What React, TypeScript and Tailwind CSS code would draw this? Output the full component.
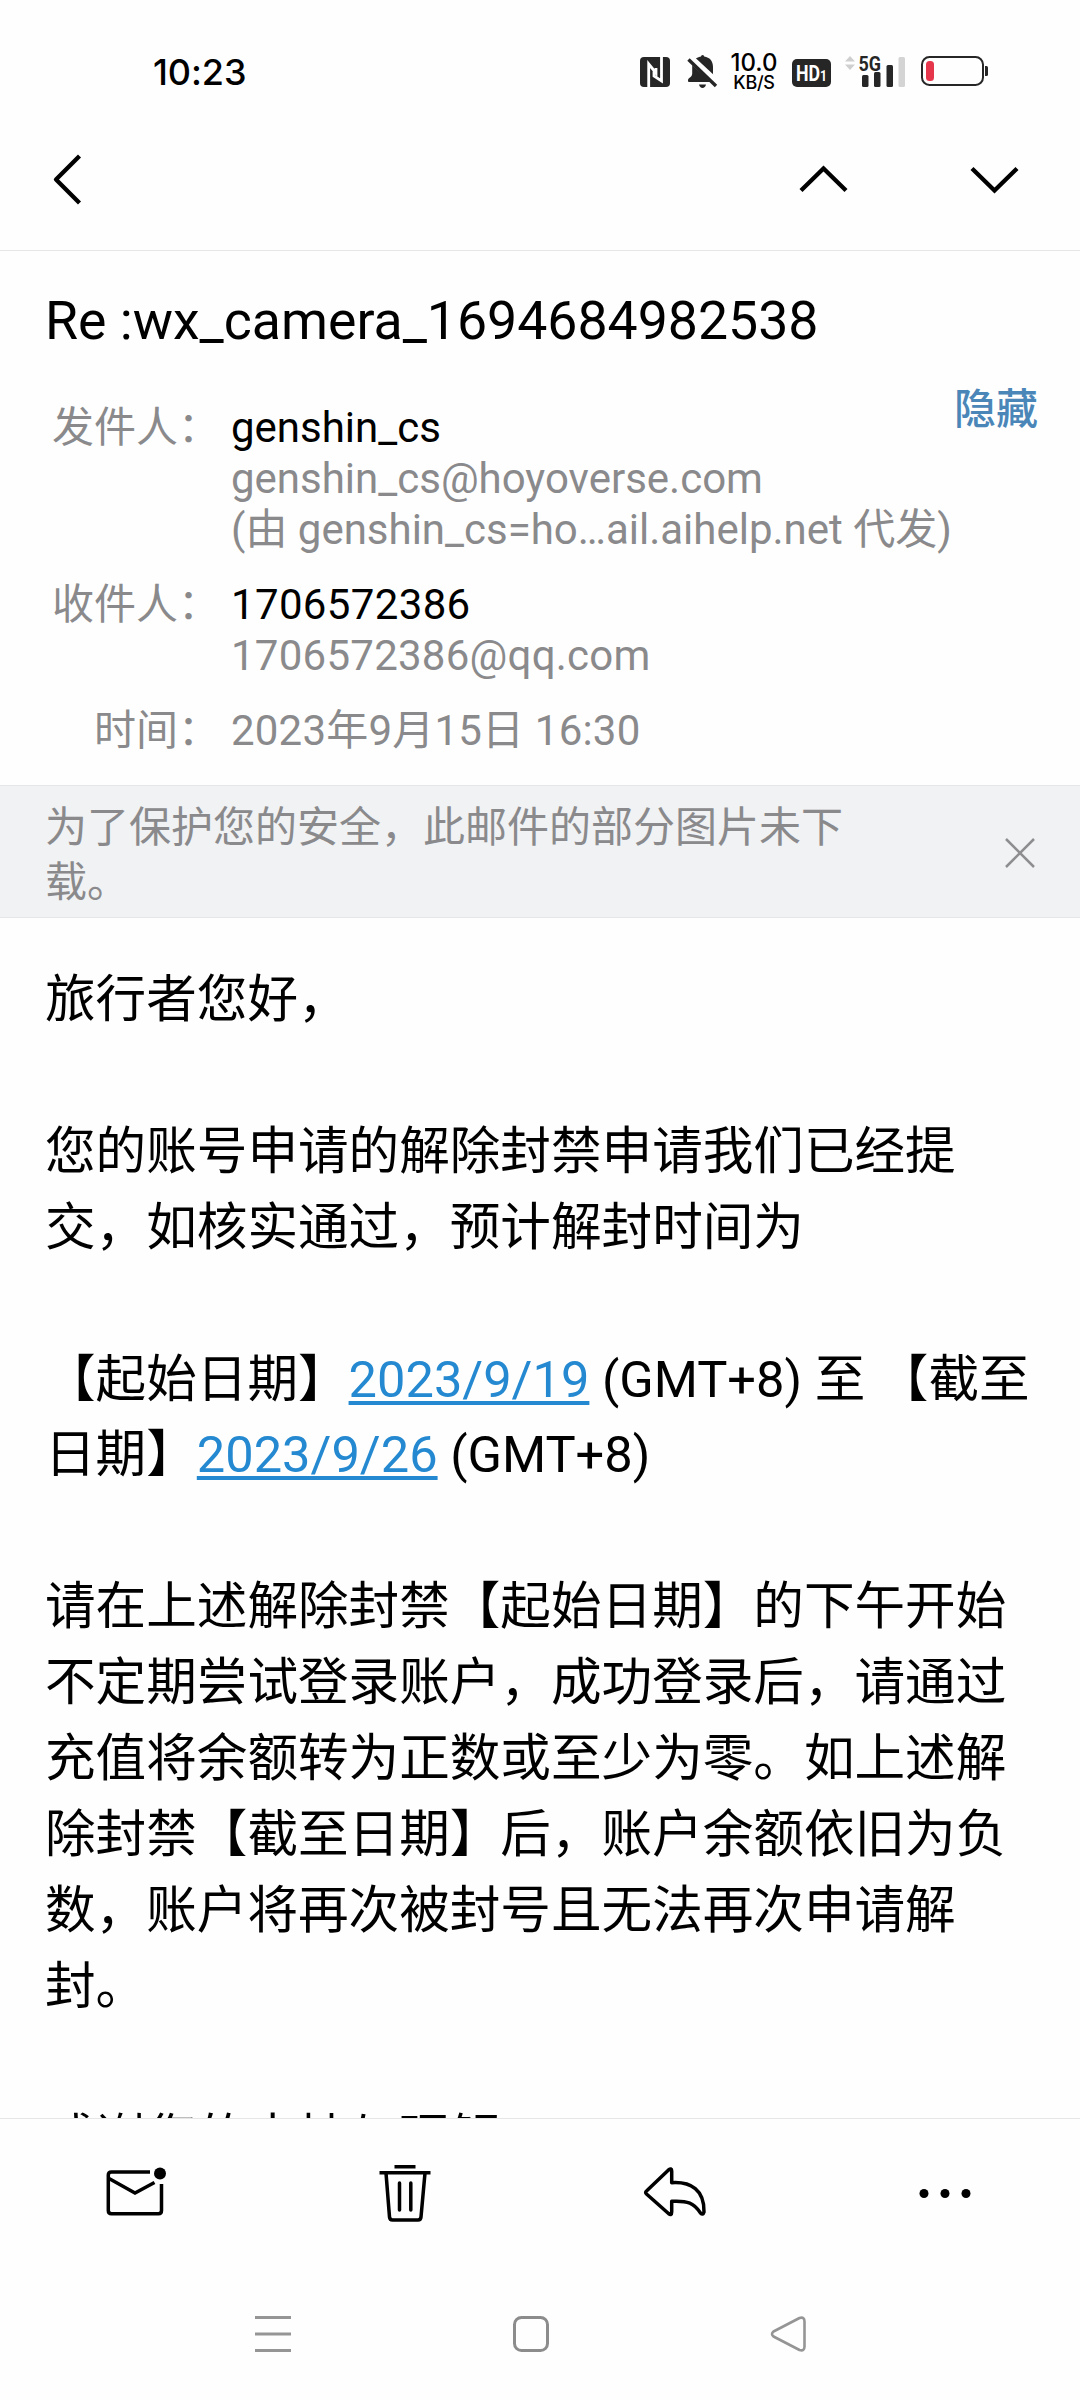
import React from "react";

interface MailFieldProps {
    label: string;
    children: React.ReactNode;
}

const MailField: React.FC<MailFieldProps> = ({ label, children }) => {
    return (
        <div className="flex text-[42px] leading-[51px] text-[#8a8a8c] whitespace-nowrap">
            <div className="w-[220px] mr-[11px] text-right">{label}</div>
            <div>{children}</div>
        </div>
    );
};

const StatusBar: React.FC = () => {
    return (
        <div className="flex h-[144px] shrink-0 pl-[153px]">
            <div className="w-[487px] pt-[50px] font-['Inter'] text-[36px] leading-[44px] font-medium tracking-[-0.1px] text-black">
                10:23
            </div>
            {/* NFC */}
            <svg className="mt-[57px] w-[30px] h-[30px]" viewBox="0 0 30 30">
                <rect width="30" height="30" rx="4" fill="#262626" />
                <path
                    d="M8.700 30V7L16 16V11M14 14.500V19L21.500 24V0"
                    fill="none"
                    stroke="#fff"
                    strokeWidth="2.800"
                />
            </svg>
            {/* muted bell */}
            <svg className="mt-[54px] ml-[17px] w-[32px] h-[36px]" viewBox="0 0 32 36">
                <path
                    d="M14 2.500a1.600 1.600 0 0 1 3.200 0c5.500.8 8.800 4.500 8.800 10.500v7c0 2 1 3 3 4.500 1.200 1 1.500 2.500.8 3.500H1.500c-1-1.500-.5-3 .8-4 2-1.500 2.900-2.500 2.900-4.500V13C5.200 7 8.500 3.300 14 2.500z"
                    fill="#262626"
                />
                <path d="M12 30.500h7c-.5 2.300-1.800 3.500-3.500 3.500s-3-1.200-3.500-3.500z" fill="#262626" />
                <path d="M2.500 3.500L31 30" stroke="#fff" strokeWidth="7.500" />
                <path d="M1.500 5.500L29 32" stroke="#262626" strokeWidth="3.400" />
            </svg>
            <div className="w-[50px] ml-[10px] pt-[52px] flex flex-col items-center font-['Inter'] font-medium text-black">
                <span className="text-[24px] leading-[21px]">10.0</span>
                <span className="text-[18px] leading-[20px] tracking-[-0.3px]">KB/S</span>
            </div>
            <svg className="mt-[59px] ml-[13px] w-[39px] h-[28px]" viewBox="0 0 39 28">
                <rect width="39" height="28" rx="5" fill="#262626" />
                <text x="4" y="21.500" fill="#fff" textLength="31" lengthAdjust="spacingAndGlyphs" className="font-['Roboto'] text-[22px] font-bold">
                    HD<tspan className="text-[15px]">1</tspan>
                </text>
            </svg>
            {/* 5G signal */}
            <svg className="mt-[52px] ml-[13px] w-[64px] h-[38px]" viewBox="844 52 64 38">
                <path d="M850 56l5 5.500h-10zM850 70l5-5.500h-10z" fill="#cfcfcf" />
                <text x="858.500" y="70.500" textLength="22.500" lengthAdjust="spacingAndGlyphs" fill="#262626" className="font-['Roboto'] text-[21px] font-bold">
                    5G
                </text>
                <rect x="862" y="75" width="6.500" height="12" rx="1.500" fill="#262626" />
                <rect x="874" y="72" width="6.500" height="15" rx="1.500" fill="#262626" />
                <rect x="886.500" y="65" width="6.500" height="22" rx="1.500" fill="#262626" />
                <rect x="898.500" y="57" width="6.500" height="30" rx="1.500" fill="#d4d4d4" />
            </svg>
            <svg className="mt-[56px] ml-[13px] w-[68px] h-[30px]" viewBox="0 0 68 30">
                <rect x="1" y="1" width="61" height="28" rx="7.500" fill="none" stroke="#262626" strokeWidth="2" />
                <rect x="5" y="5" width="8" height="20" rx="3.500" fill="#e6364c" />
                <path d="M64 10h1.500q1.500 0 1.500 1.500v7q0 1.500-1.500 1.500H64z" fill="#262626" />
            </svg>
        </div>
    );
};

const NavBar: React.FC = () => {
    return (
        <div className="flex h-[107px] shrink-0 items-start border-b border-[#e6e6e8]">
            <svg className="mt-[10px] ml-[52px] w-[30px] h-[51px]" viewBox="0 0 30 51" fill="none" stroke="#000" strokeWidth="4.300" strokeLinejoin="round">
                <path d="M27.500 2L4 25.500L27.500 49" />
            </svg>
            <svg className="mt-[21px] ml-[717px] w-[50px] h-[30px]" viewBox="0 0 50 30" fill="none" stroke="#000" strokeWidth="4.300">
                <path d="M2 25.500L24.500 3.500L47 25.500" />
            </svg>
            <svg className="mt-[21px] ml-[121px] w-[50px] h-[30px]" viewBox="0 0 50 30" fill="none" stroke="#000" strokeWidth="4.300">
                <path d="M2 3.500L24.500 25.500L47 3.500" />
            </svg>
        </div>
    );
};

const MailHeader: React.FC = () => {
    return (
        <div className="h-[534px] shrink-0">
            <h1 className="pt-[38px] pl-[45px] text-[53.6px] leading-[64px] text-black">
                Re :wx_camera_1694684982538
            </h1>
            <div className="flex justify-between items-start pt-[49px]">
                <div className="flex flex-col gap-6">
                    <MailField label="发件人：">
                        <div className="text-black">genshin_cs</div>
                        <div>genshin_cs@hoyoverse.com</div>
                        <div>(由 genshin_cs=ho…ail.aihelp.net 代发)</div>
                    </MailField>
                    <MailField label="收件人：">
                        <div className="tracking-[0.35px] text-black">1706572386</div>
                        <div className="tracking-[0.25px]">1706572386@qq.com</div>
                    </MailField>
                    <MailField label="时间：">
                        <span className="tracking-[0.2px]">2023年9月15日 16:30</span>
                    </MailField>
                </div>
                <button className="-mt-[18px] mr-[42px] text-[42px] leading-[51px] font-medium text-[#4a86b8]">
                    隐藏
                </button>
            </div>
        </div>
    );
};

const ImageNotice: React.FC = () => {
    return (
        <div className="flex h-[133px] shrink-0 items-center justify-between pt-[2px] pl-[45px] pr-[44px] bg-[#f1f2f4] border-y border-[#e4e6e8]">
            <p className="w-[810px] pt-[4px] text-[42px] leading-[55px] text-[#8a8a8c]">
                为了保护您的安全，此邮件的部分图片未下载。
            </p>
            <svg className="w-[32px] h-[32px]" viewBox="0 0 32 32" fill="none" stroke="#8e8e90" strokeWidth="2.500">
                <path d="M2 2L30 30M30 2L2 30" />
            </svg>
        </div>
    );
};

const MailBody: React.FC = () => {
    return (
        <div className="flex-1 min-h-0 overflow-hidden pt-[44px] pl-[45px] text-[50.6px] leading-[75.9px] text-black whitespace-nowrap">
            <p>旅行者您好，</p>
            <br />
            <p>
                您的账号申请的解除封禁申请我们已经提
                <br />
                交，如核实通过，预计解封时间为
            </p>
            <br />
            <p>
                【起始日期】
                <a className="text-[#2489d0] underline decoration-[4px] underline-offset-[4px] [text-decoration-skip-ink:none]">2023/9/19</a>
                {" (GMT+8) 至 【截至"}
                <br />
                日期】
                <a className="text-[#2489d0] underline decoration-[4px] underline-offset-[4px] [text-decoration-skip-ink:none]">2023/9/26</a>
                {" (GMT+8)"}
            </p>
            <br />
            <p>
                请在上述解除封禁【起始日期】的下午开始
                <br />
                不定期尝试登录账户，成功登录后，请通过
                <br />
                充值将余额转为正数或至少为零。如上述解
                <br />
                除封禁【截至日期】后，账户余额依旧为负
                <br />
                数，账户将再次被封号且无法再次申请解
                <br />
                封。
            </p>
            <br />
            <p>感谢您的支持与理解</p>
        </div>
    );
};

const Toolbar: React.FC = () => {
    return (
        <div className="grid grid-cols-4 h-[150px] shrink-0 items-center justify-items-center border-t border-[#e6e6e8] pb-[2px]">
            <svg className="w-[62px] h-[62px]" viewBox="104 2162 62 62" fill="none" stroke="#000" strokeWidth="3.500">
                <path d="M150 2172H111.500Q108.300 2172 108.300 2175V2210.500Q108.300 2213.700 111.500 2213.700H158.500Q161.500 2213.700 161.500 2210.500V2184" />
                <path d="M109 2178.500L135 2193L154.500 2182.500" />
                <circle cx="160" cy="2173.500" r="6" fill="#000" stroke="none" />
            </svg>
            <svg className="w-[54px] h-[62px]" viewBox="378.500 2162 54 62" fill="none" stroke="#000" strokeWidth="3.500">
                <path d="M395 2166.800H416M380 2172.700H431" />
                <path d="M386.500 2173L390 2217Q390.300 2220 393 2220H418.500Q421.200 2220 421.500 2217L425.500 2173" />
                <path d="M400 2183V2210M411.300 2183V2210" strokeLinecap="round" />
            </svg>
            <svg className="w-[66px] h-[62px]" viewBox="642 2162 66 62" fill="none" stroke="#000" strokeWidth="3.500" strokeLinejoin="round">
                <path d="M646.500 2191L668.500 2170Q671.700 2167.500 671.700 2171V2182.700C691 2181.500 704.500 2190 704 2212Q703 2215.500 700.500 2213C694 2203 688 2200.500 671.700 2201.300V2212Q671.700 2216 668.500 2213.500L646.500 2194Q644.800 2192.500 646.500 2191Z" />
            </svg>
            <svg className="w-[54px] h-[62px]" viewBox="918.500 2162 54 62" fill="#000">
                <circle cx="924.500" cy="2193.500" r="4.500" />
                <circle cx="945.500" cy="2193.500" r="4.500" />
                <circle cx="966.500" cy="2193.500" r="4.500" />
            </svg>
        </div>
    );
};

const SystemNav: React.FC = () => {
    return (
        <div className="flex h-[132px] shrink-0 pt-[46px]">
            <svg className="ml-[253px] w-[40px] h-[40px]" viewBox="0 0 40 40" stroke="#959595" strokeWidth="3">
                <path d="M2 3.500H38M2 20H38M2 36.500H38" />
            </svg>
            <svg className="ml-[218px] w-[40px] h-[40px]" viewBox="0 0 40 40" fill="none" stroke="#8c8c8c" strokeWidth="3">
                <rect x="3.500" y="3.500" width="33" height="33" rx="7" />
            </svg>
            <svg className="ml-[218px] w-[40px] h-[40px]" viewBox="0 0 40 40" fill="none" stroke="#959595" strokeWidth="2.600" strokeLinejoin="round">
                <path d="M4.500 17.500L30.500 4Q35.500 2.500 35.500 7.500V32.500Q35.500 37.500 30.500 36L4.500 22.500Q1.500 20 4.500 17.500Z" />
            </svg>
        </div>
    );
};

const App: React.FC = () => {
    return (
        <div className="w-[1080px] h-[2400px] flex flex-col overflow-hidden bg-[#fefefe] font-['Roboto','Noto_Sans_CJK_SC',sans-serif]">
            <StatusBar />
            <NavBar />
            <MailHeader />
            <ImageNotice />
            <MailBody />
            <Toolbar />
            <SystemNav />
        </div>
    );
};

export default App;
